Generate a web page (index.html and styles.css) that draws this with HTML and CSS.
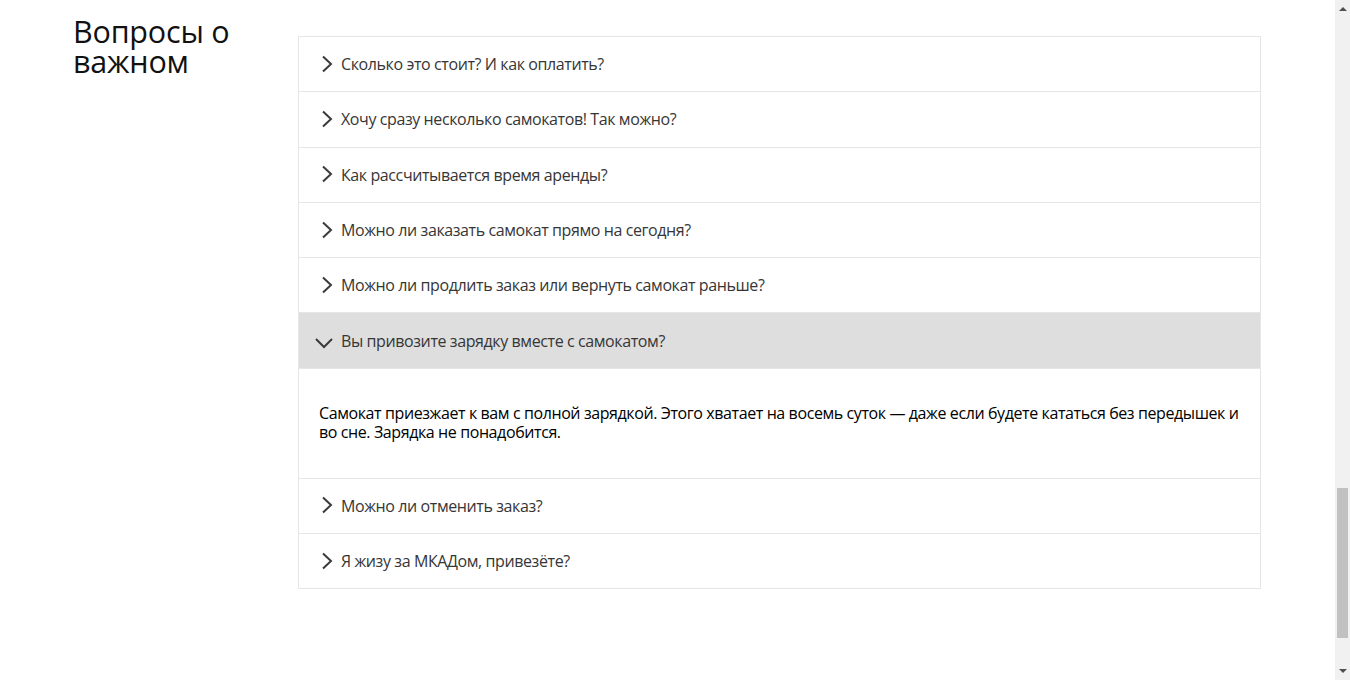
FILE: index.html
```html
<!DOCTYPE html>
<html lang="ru">
<head>
<meta charset="utf-8">
<link rel="stylesheet" href="styles.css">
</head>
<body>
<div class="page">
  <h2 class="title">Вопросы о важном</h2>
  <div class="accordion">
    <div class="item"><div class="head"><svg class="chev" viewBox="0 0 12 18"><path d="M2 1.5l8 7.5-8 7.5"/></svg><span>Сколько это стоит? И как оплатить?</span></div></div>
    <div class="item"><div class="head"><svg class="chev" viewBox="0 0 12 18"><path d="M2 1.5l8 7.5-8 7.5"/></svg><span>Хочу сразу несколько самокатов! Так можно?</span></div></div>
    <div class="item"><div class="head"><svg class="chev" viewBox="0 0 12 18"><path d="M2 1.5l8 7.5-8 7.5"/></svg><span>Как рассчитывается время аренды?</span></div></div>
    <div class="item"><div class="head"><svg class="chev" viewBox="0 0 12 18"><path d="M2 1.5l8 7.5-8 7.5"/></svg><span>Можно ли заказать самокат прямо на сегодня?</span></div></div>
    <div class="item"><div class="head"><svg class="chev" viewBox="0 0 12 18"><path d="M2 1.5l8 7.5-8 7.5"/></svg><span>Можно ли продлить заказ или вернуть самокат раньше?</span></div></div>
    <div class="item open"><div class="head"><svg class="chev down" viewBox="0 0 20 12"><path d="M2 2l8 8 8-8"/></svg><span>Вы привозите зарядку вместе с самокатом?</span></div>
      <div class="panel"><p>Самокат приезжает к вам с полной зарядкой. Этого хватает на восемь суток — даже если будете кататься без передышек и во сне. Зарядка не понадобится.</p></div>
    </div>
    <div class="item"><div class="head"><svg class="chev" viewBox="0 0 12 18"><path d="M2 1.5l8 7.5-8 7.5"/></svg><span>Можно ли отменить заказ?</span></div></div>
    <div class="item"><div class="head"><svg class="chev" viewBox="0 0 12 18"><path d="M2 1.5l8 7.5-8 7.5"/></svg><span>Я жизу за МКАДом, привезёте?</span></div></div>
  </div>
</div>
<div class="scrollbar">
  <div class="arrow up"></div>
  <div class="thumb"></div>
  <div class="arrow dn"></div>
</div>
</body>
</html>
```
FILE: styles.css
```css
html, body { margin: 0; padding: 0; background: #fff; }
body { font-family: "Open Sans", "Noto Sans", sans-serif; color: #000; height: 680px; overflow: hidden; }
.page { display: flex; padding: 16px 0 0 73px; width: 1188px; }
.title { margin: 0; width: 225px; flex: none; font-weight: 400; font-size: 30.5px; line-height: 30px; color: #111; letter-spacing: -0.2px; }
.accordion { margin-top: 20px; width: 961px; border: 1px solid #e6e6e6; }
.item + .item { border-top: 1px solid #e6e6e6; }
.head { height: 54.3px; display: flex; align-items: center; padding-left: 22px; font-size: 16px; color: #363636; letter-spacing: -0.4px; }
.chev { width: 12px; height: 18px; margin-right: 8px; flex: none; margin-top: -1px; }
.chev path { fill: none; stroke: #3a3a3a; stroke-width: 2; }
.chev.down { width: 20px; height: 12px; margin-left: -7px; margin-right: 7px; margin-top: 5px; }
.open .head { background: #dedede; }
.panel { height: 109px; border-top: 1px solid #e6e6e6; padding: 0 20px; display: flex; align-items: center; }
.panel p { margin: 0; font-size: 16px; line-height: 19px; letter-spacing: -0.4px; color: #000; }
.scrollbar { position: fixed; top: 0; right: 0; width: 15px; height: 680px; background: #f1f1f1; }
.thumb { position: absolute; left: 2px; width: 11px; top: 488px; height: 150px; background: #c1c1c1; }
.arrow { position: absolute; left: 4px; width: 0; height: 0; border-left: 4px solid transparent; border-right: 4px solid transparent; }
.arrow.up { top: 7px; border-bottom: 4px solid #505050; }
.arrow.dn { bottom: 7px; border-top: 4px solid #505050; }
```
